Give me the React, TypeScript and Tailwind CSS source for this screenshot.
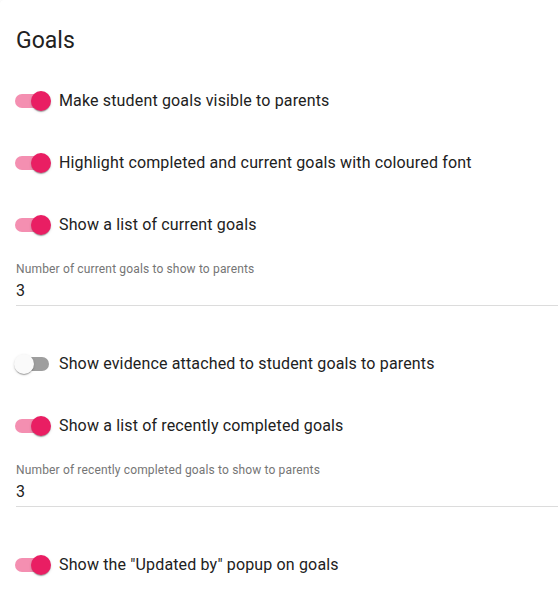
import { useState } from "react";

type Item =
  | { kind: "switch"; label: string; on: boolean }
  | { kind: "field"; label: string; value: string };

const items: Item[] = [
  { kind: "switch", label: "Make student goals visible to parents", on: true },
  { kind: "switch", label: "Highlight completed and current goals with coloured font", on: true },
  { kind: "switch", label: "Show a list of current goals", on: true },
  { kind: "field", label: "Number of current goals to show to parents", value: "3" },
  { kind: "switch", label: "Show evidence attached to student goals to parents", on: false },
  { kind: "switch", label: "Show a list of recently completed goals", on: true },
  { kind: "field", label: "Number of recently completed goals to show to parents", value: "3" },
  { kind: "switch", label: 'Show the "Updated by" popup on goals', on: true },
];

function Toggle({ on, onClick }: { on: boolean; onClick: () => void }) {
  return (
    <button onClick={onClick} className="relative w-[34px] h-[14px] shrink-0 cursor-pointer">
      <span
        className={
          "absolute inset-0 rounded-full " + (on ? "bg-[#f48fb1]" : "bg-[#9e9e9e]")
        }
      />
      <span
        className={
          "absolute top-[-3px] w-[20px] h-[20px] rounded-full shadow-[0_2px_1px_-1px_rgba(0,0,0,0.2),0_1px_1px_0_rgba(0,0,0,0.14),0_1px_3px_0_rgba(0,0,0,0.12)] transition-all " +
          (on ? "left-[16px] bg-[#e91e63]" : "left-[-1px] bg-[#fafafa]")
        }
      />
    </button>
  );
}

export default function App() {
  const [state, setState] = useState(items);

  const flip = (i: number) =>
    setState((s) =>
      s.map((it, j) => (j === i && it.kind === "switch" ? { ...it, on: !it.on } : it))
    );

  return (
    <div
      className="min-h-[597px] bg-white text-[#212121] tracking-[0.15px] rounded-tl-[4px] shadow-[0_1px_3px_0_rgba(0,0,0,0.12)]"
      style={{ fontFamily: 'Roboto, "Noto Sans", sans-serif' }}
    >
      <div className="h-[70px] pl-[16px] pt-[29px]">
        <h2 className="text-[23px] leading-[23px] font-normal tracking-normal">Goals</h2>
      </div>

      {state.map((it, i) =>
        it.kind === "switch" ? (
          <div key={i} className="h-[62px] flex items-center pl-[15px] gap-[10px]">
            <Toggle on={it.on} onClick={() => flip(i)} />
            <span className="text-[16px] leading-6">{it.label}</span>
          </div>
        ) : (
          <div key={i} className="ml-[16px] mt-[5px] mb-[27px]">
            <div className="text-[12px] leading-4 text-[#757575]">{it.label}</div>
            <div className="mt-[2px] pb-[2px] border-b border-[#dcdcdc]">
              <input
                defaultValue={it.value}
                className="w-full text-[16px] leading-6 h-6 outline-none bg-transparent"
              />
            </div>
          </div>
        )
      )}
    </div>
  );
}
